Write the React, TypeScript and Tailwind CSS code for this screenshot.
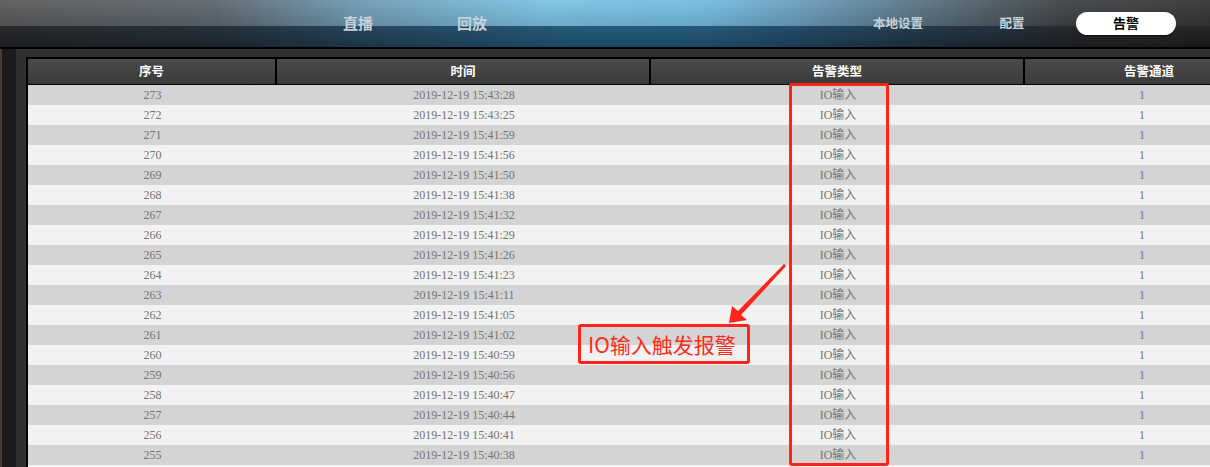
const rows = [
  ["273", "15:43:28"],
  ["272", "15:43:25"],
  ["271", "15:41:59"],
  ["270", "15:41:56"],
  ["269", "15:41:50"],
  ["268", "15:41:38"],
  ["267", "15:41:32"],
  ["266", "15:41:29"],
  ["265", "15:41:26"],
  ["264", "15:41:23"],
  ["263", "15:41:11"],
  ["262", "15:41:05"],
  ["261", "15:41:02"],
  ["260", "15:40:59"],
  ["259", "15:40:56"],
  ["258", "15:40:47"],
  ["257", "15:40:44"],
  ["256", "15:40:41"],
  ["255", "15:40:38"],
];

function TopBar() {
  return (
    <div className="grid h-[49px] border-b-2 border-black">
      {/* glossy background: light upper half, dark lower half */}
      <div className="col-start-1 row-start-1 flex flex-col">
        <div className="h-[26px] bg-[linear-gradient(to_right,#5a5a5a_0%,#5d6770_18%,#6f9db6_30%,#7cc3e4_45%,#74bde2_58%,#6b9fbf_66%,#566b78_78%,#3f4245_88%,#353535_100%)]">
          <div className="h-full bg-[linear-gradient(to_bottom,rgba(255,255,255,0.06),rgba(0,0,0,0.12))]" />
        </div>
        <div className="flex-1 bg-[linear-gradient(to_right,#222325_0%,#1f2a33_18%,#1f3f56_30%,#1f5677_48%,#1f5475_58%,#1e4562_66%,#1e2d3a_80%,#202123_90%,#1f1f1f_100%)]">
          <div className="h-full bg-[linear-gradient(to_bottom,rgba(255,255,255,0.03),rgba(0,0,0,0.15))]" />
        </div>
      </div>
      <div className="col-start-1 row-start-1 flex items-center pb-[1px] font-['Noto_Sans_CJK_SC',sans-serif] font-bold text-[#c6d3da]">
        <div className="w-[301px]" />
        <div className="w-[114px] text-center text-[15px]">直播</div>
        <div className="w-[114px] text-center text-[15px]">回放</div>
        <div className="w-[312px]" />
        <div className="w-[114px] text-center text-[12.5px]">本地设置</div>
        <div className="w-[114px] text-center text-[12.5px]">配置</div>
        <div className="ml-[7px] flex h-[23px] w-[100px] items-center justify-center rounded-full bg-white text-[13px] text-black shadow-[0_1px_1px_rgba(0,0,0,0.6)]">
          告警
        </div>
      </div>
    </div>
  );
}

function HeaderCell({ label, width, last }: { label: string; width: string; last?: boolean }) {
  return (
    <div
      className={`${width} flex h-[25px] shrink-0 items-center justify-center ${last ? "" : "border-r-2 border-black"}`}
    >
      {label}
    </div>
  );
}

export default function App() {
  return (
    <div className="relative h-[467px] w-full overflow-hidden bg-[#333333]">
      <TopBar />
      <div className="flex">
        <div className="h-[430px] w-[16px] shrink-0 border-l-2 border-[#4a3a32] bg-[#1b1b1b]" />
        <div className="flex-1 bg-[#2f2f2f] pl-[10px] pt-[8px]">
          <div className="border-l-2 border-t-2 border-black bg-[#333]">
            <div className="flex border-b border-black bg-[linear-gradient(to_bottom,#4b4b4b,#3a3a3a)] font-['Noto_Sans_CJK_SC',sans-serif] text-[12.5px] font-bold text-white">
              <HeaderCell label="序号" width="w-[249px]" />
              <HeaderCell label="时间" width="w-[374px]" />
              <HeaderCell label="告警类型" width="w-[374px]" />
              <HeaderCell label="告警通道" width="w-[248px]" last />
            </div>
            <div className="font-['Liberation_Serif','Noto_Sans_CJK_SC',serif] text-[12px] text-[#737373]">
              {rows.map(([no, time], i) => (
                <div
                  key={no}
                  className={`flex h-[20px] items-center ${i % 2 === 0 ? "bg-[#d4d4d4]" : "bg-[#f2f2f2]"}`}
                >
                  <div className="w-[249px] shrink-0 text-center">{no}</div>
                  <div className="w-[374px] shrink-0 text-center">2019-12-19 {time}</div>
                  <div className="w-[374px] shrink-0 text-center">IO输入</div>
                  <div className="w-[234px] shrink-0 text-center">1</div>
                </div>
              ))}
              <div className="h-[20px] bg-[#f2f2f2]" />
            </div>
          </div>
        </div>
      </div>

      {/* red annotations */}
      <div className="absolute left-[789px] top-[83px] h-[383px] w-[100px] rounded-[3px] border-[3px] border-[#ff2318]" />
      <div className="absolute left-[578px] top-[324px] flex h-[40px] w-[172px] items-center rounded-[3px] border-[3px] border-[#ff2318] pl-[7px] font-['Noto_Sans_CJK_SC',sans-serif] text-[21px] leading-none text-[#ff2a1a]">
        IO输入触发报警
      </div>
      <svg className="absolute left-[720px] top-[260px]" width="70" height="70" viewBox="0 0 70 70">
        <polygon points="9,63 12,46 18,51 64,4 66,6 21,55 27,60" fill="#ff2318" />
      </svg>
    </div>
  );
}
